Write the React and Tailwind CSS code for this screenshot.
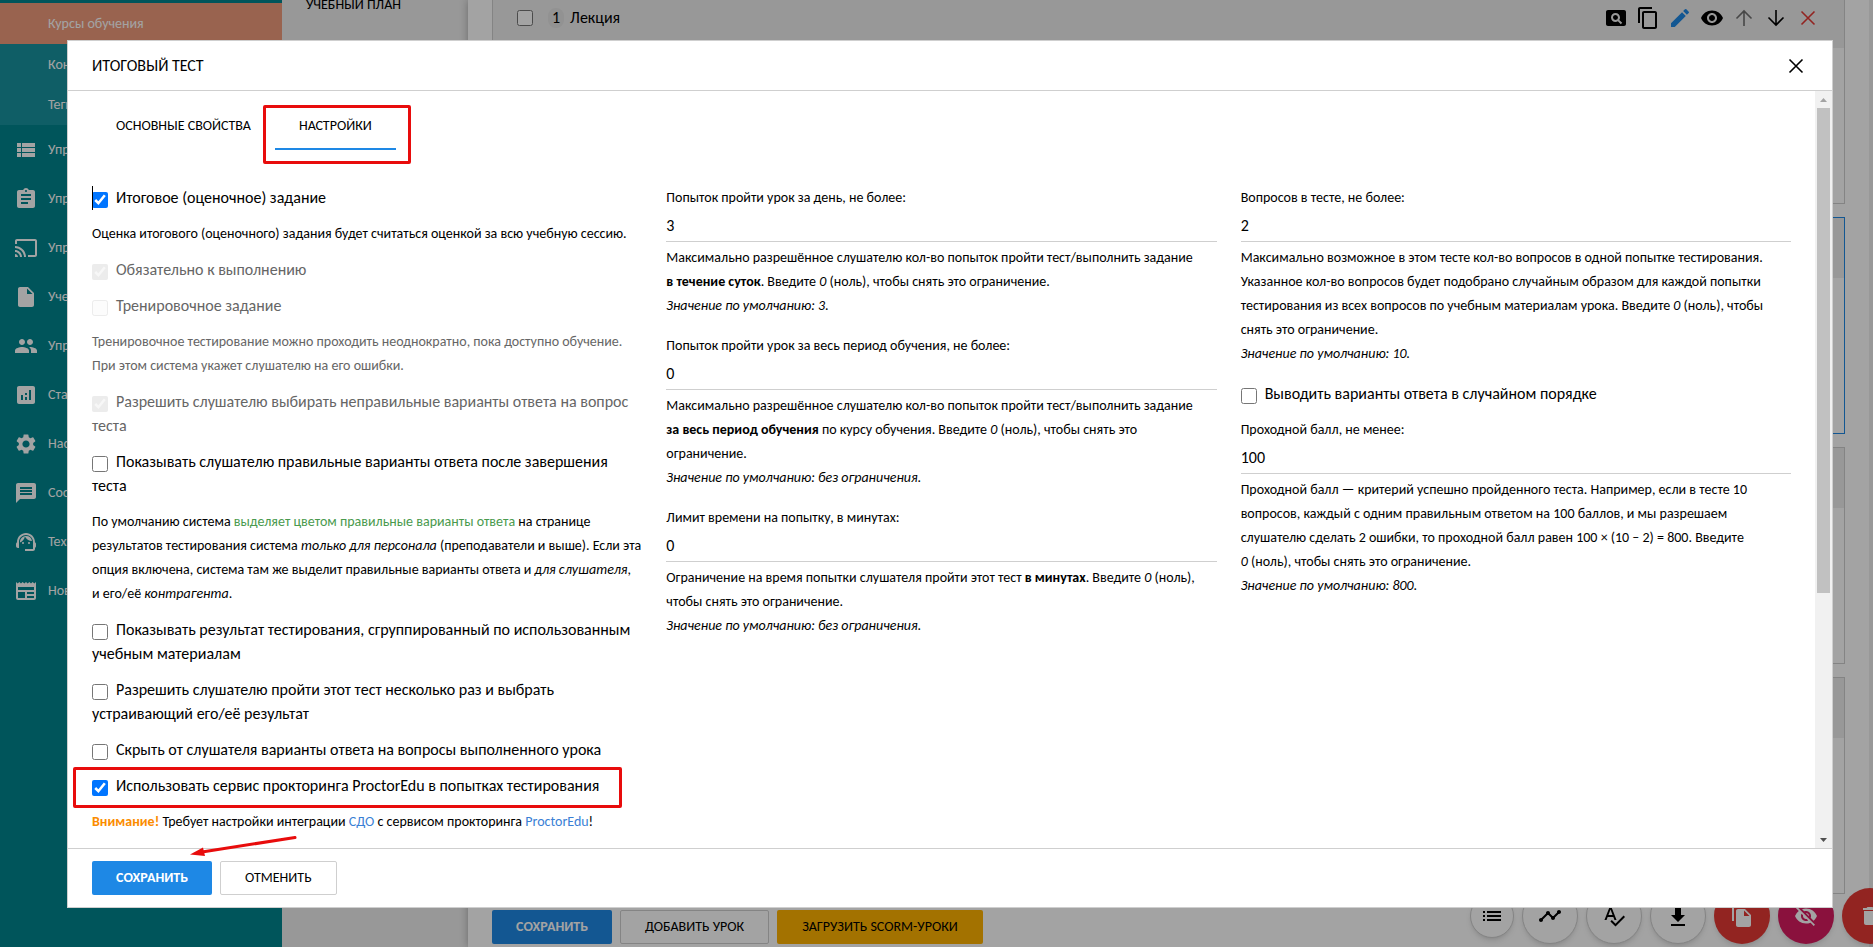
import { useState } from 'react'
import {
  MdAnalytics, MdAssignment, MdCast, MdContentCopy, MdDelete, MdEdit, MdFileCopy, MdInsertDriveFile,
  MdList, MdMessage, MdPageview, MdPeople, MdSettings, MdSpellcheck, MdSupportAgent, MdTimeline,
  MdViewList, MdVisibility, MdVisibilityOff,
} from 'react-icons/md'

function NewspaperIcon({ className }) {
  return (
    <svg viewBox="0 0 24 24" className={className} fill="currentColor" aria-hidden="true">
      <path
        fillRule="evenodd"
        d="M2 3l1.67 1.5L5.33 3 7 4.5 8.67 3l1.66 1.5L12 3l1.67 1.5L15.33 3 17 4.5 18.67 3l1.66 1.5L22 3v16a2 2 0 0 1-2 2H4a2 2 0 0 1-2-2V3zm2 5v3h16V8H4zm0 5v6h7v-6H4zm9 0v2h7v-2h-7zm0 4v2h7v-2h-7z"
      />
    </svg>
  )
}

function DownloadIcon({ className }) {
  return (
    <svg viewBox="0 0 24 24" className={className} fill="currentColor" aria-hidden="true">
      <path d="M9 2h6v9h4l-7 7-7-7h4zM5 20h14v2H5z" />
    </svg>
  )
}

function LineIcon({ className, d }) {
  return (
    <svg viewBox="0 0 24 24" className={className} fill="none" stroke="currentColor" strokeWidth="1.6" aria-hidden="true">
      <path d={d} />
    </svg>
  )
}

const CloseIcon = props => <LineIcon d="M5.500 5.500l13 13M18.500 5.500l-13 13" {...props} />
const UpIcon = props => <LineIcon d="M12 20V5M4.500 12.500L12 5l7.500 7.500" {...props} />
const DownIcon = props => <LineIcon d="M12 4v15M4.500 11.500L12 19l7.500-7.500" {...props} />

const subItems = ['Контрагенты', 'Теги']

const menu = [
  { label: 'Управление', Icon: MdViewList },
  { label: 'Управление', Icon: MdAssignment },
  { label: 'Управление', Icon: MdCast },
  { label: 'Учебные', Icon: MdInsertDriveFile },
  { label: 'Управление', Icon: MdPeople },
  { label: 'Статистика', Icon: MdAnalytics },
  { label: 'Настройки', Icon: MdSettings },
  { label: 'Сообщения', Icon: MdMessage },
  { label: 'Техподдержка', Icon: MdSupportAgent },
  { label: 'Новости', Icon: NewspaperIcon },
]

const lessonActions = [
  { label: 'Просмотр', Icon: MdPageview, color: 'text-black' },
  { label: 'Копировать', Icon: MdContentCopy, color: 'text-black' },
  { label: 'Изменить', Icon: MdEdit, color: 'text-[#1e88e5]' },
  { label: 'Показать', Icon: MdVisibility, color: 'text-black' },
  { label: 'Вверх', Icon: UpIcon, color: 'text-[#707070]' },
  { label: 'Вниз', Icon: DownIcon, color: 'text-black' },
  { label: 'Удалить', Icon: CloseIcon, color: 'text-[#e53935]' },
]

const fabs = [
  { label: 'Список', Icon: MdList, style: 'size-11 border border-[#cfcfcf] bg-white text-black' },
  { label: 'График', Icon: MdTimeline, style: 'size-14 border border-[#cfcfcf] bg-white text-black' },
  { label: 'Орфография', Icon: MdSpellcheck, style: 'size-14 border border-[#cfcfcf] bg-white text-black' },
  { label: 'Скачать', Icon: DownloadIcon, style: 'size-14 border border-[#cfcfcf] bg-white text-black' },
  { label: 'Дублировать', Icon: MdFileCopy, style: 'size-14 bg-[#e53935] text-white' },
  { label: 'Скрыть', Icon: MdVisibilityOff, style: 'size-14 bg-[#d81b60] text-white' },
  { label: 'Удалить всё', Icon: MdDelete, style: 'size-14 bg-[#e53935] text-white' },
]

function Sidebar() {
  return (
    <nav className="w-[282px] shrink-0 bg-[#00868f] pt-[3px] text-sm text-white">
      <a href="#courses" className="flex h-[41px] items-center bg-[#f09b7c] pl-12">Курсы обучения</a>
      <div className="bg-[#1894a0] pt-px">
        {subItems.map(label => (
          <a key={label} href="#sub" className="flex h-10 items-center pl-12">{label}</a>
        ))}
      </div>
      {menu.map(({ label, Icon }, i) => (
        <a key={i} href="#menu" className="flex h-[49px] items-center gap-2.5 pl-3.5">
          <Icon className="size-6" />
          {label}
        </a>
      ))}
    </nav>
  )
}

function LessonCard({ active, children }) {
  return (
    <section className={`h-[217px] shrink-0 border bg-white ${active ? 'border-[#1e88e5]' : 'border-[#cfcfcf]'}`}>
      <header className="flex h-[60px] items-center bg-[#eee] pr-4 pl-6">{children}</header>
    </section>
  )
}

function Backdrop() {
  return (
    <div className="flex h-full">
      <Sidebar />
      <aside className="w-[186px] shrink-0 bg-[#eee] pl-6">
        <a href="#plan" className="-mt-[7px] block text-sm leading-6">УЧЕБНЫЙ ПЛАН</a>
      </aside>
      <main className="flex min-w-0 flex-1 flex-col bg-white pr-6 pl-6 shadow-[0_0_8px_rgba(0,0,0,0.3)]">
        <div className="-mt-[13px] flex flex-col gap-[13px]">
          <LessonCard>
            <input type="checkbox" aria-label="Выбрать урок" className="size-4" />
            <span className="ml-[15px] rounded-full bg-[#e4e4e4] px-1 text-base leading-5">1</span>
            <span className="ml-1.5 text-base">Лекция</span>
            <div className="ml-auto flex gap-2 pr-2">
              {lessonActions.map(({ label, Icon, color }) => (
                <button key={label} type="button" aria-label={label} className={color}>
                  <Icon className="size-6" />
                </button>
              ))}
            </div>
          </LessonCard>
          <LessonCard active />
          <LessonCard />
          <LessonCard />
        </div>
        <div className="mt-4 flex gap-2 text-sm">
          <button type="button" className="h-[34px] rounded-xs bg-[#1e88e5] px-6 font-bold text-white">СОХРАНИТЬ</button>
          <button type="button" className="h-[34px] rounded-xs border border-[#cfcfcf] px-6">ДОБАВИТЬ УРОК</button>
          <button type="button" className="h-[34px] rounded-xs bg-[#ffb300] px-[25px]">ЗАГРУЗИТЬ SCORM-УРОКИ</button>
        </div>
      </main>
      <div className="w-1 shrink-0 bg-[#eee]" />
      <div className="absolute right-[-25px] bottom-[3px] flex items-center gap-2">
        {fabs.map(({ label, Icon, style }) => (
          <button
            key={label}
            type="button"
            aria-label={label}
            className={`flex items-center justify-center rounded-full shadow-md ${style}`}
          >
            <Icon className="size-6" />
          </button>
        ))}
      </div>
    </div>
  )
}

function Check({ children, checked = false, disabled = false }) {
  const [on, setOn] = useState(checked)
  return (
    <label className={`mb-3 block text-base leading-6 ${disabled ? 'text-[#666]' : ''}`}>
      <input
        type="checkbox"
        checked={on}
        disabled={disabled}
        onChange={e => setOn(e.target.checked)}
        className="mt-0.5 mr-2 size-4 align-middle disabled:opacity-40"
      />
      {children}
    </label>
  )
}

function Field({ id, label, value, hint, note }) {
  return (
    <div className="text-sm leading-6">
      <label htmlFor={id} className="block">{label}</label>
      <input id={id} defaultValue={value} className="block h-8 w-full border-b border-[#cfcfcf] text-base outline-none" />
      <p className="mt-1">{hint}</p>
      <p className="mb-4 italic">{note}</p>
    </div>
  )
}

const zero = <><i>0</i>{'\u00a0'}(ноль)</>

export default function App() {
  return (
    <div className="relative h-screen overflow-hidden bg-white text-black font-[Calibri,Carlito,Lato,sans-serif]">
      <Backdrop />

      <div className="fixed inset-0 bg-black/36 pt-10 pr-10 pb-[39px] pl-[67px]">
        <div role="dialog" aria-labelledby="dialog-title" className="flex h-full flex-col border border-[#cfcfcf] bg-white">
          <header className="flex h-[50px] shrink-0 items-center justify-between border-b border-[#cfcfcf] px-6">
            <h2 id="dialog-title" className="text-base">ИТОГОВЫЙ ТЕСТ</h2>
            <button type="button" aria-label="Закрыть"><CloseIcon className="size-6" /></button>
          </header>

          <div className="flex min-h-0 flex-1">
            <div className="min-w-0 flex-1 overflow-hidden px-6 pt-[11px]">
              <div role="tablist" className="flex h-[84px] items-start text-sm">
                <button type="button" role="tab" aria-selected="false" className="h-12 px-6">ОСНОВНЫЕ СВОЙСТВА</button>
                <div className="relative">
                  <button type="button" role="tab" aria-selected="true" className="h-12 border-b-2 border-[#1e88e5] px-6 pt-0.5">
                    НАСТРОЙКИ
                  </button>
                  <div className="pointer-events-none absolute top-[3px] -right-[15px] -bottom-3.5 -left-3 rounded-xs border-3 border-[#e80c0c]" />
                </div>
              </div>

              <div className="grid grid-cols-3 gap-6 text-sm leading-6">
                <div>
                  <div className="relative">
                    <span className="absolute top-0 left-0 h-6 w-px bg-black" />
                    <Check checked>Итоговое (оценочное) задание</Check>
                  </div>
                  <p className="mb-3">Оценка итогового (оценочного) задания будет считаться оценкой за всю учебную сессию.</p>
                  <Check checked disabled>Обязательно к выполнению</Check>
                  <Check disabled>Тренировочное задание</Check>
                  <p className="mb-3 text-[#666]">
                    Тренировочное тестирование можно проходить неоднократно, пока доступно обучение. При этом
                    система укажет слушателю на его ошибки.
                  </p>
                  <Check checked disabled>Разрешить слушателю выбирать неправильные варианты ответа на вопрос теста</Check>
                  <Check>Показывать слушателю правильные варианты ответа после завершения теста</Check>
                  <p className="mb-3">
                    По умолчанию система <span className="text-[#4a9a4e]">выделяет цветом правильные варианты ответа</span> на
                    странице результатов тестирования система <i>только для персонала</i> (преподаватели и выше). Если эта
                    опция включена, система там же выделит правильные варианты ответа и <i>для слушателя</i>,
                    и&nbsp;его/её <i>контрагента</i>.
                  </p>
                  <Check>Показывать результат тестирования, сгруппированный по использованным учебным материалам</Check>
                  <Check>Разрешить слушателю пройти этот тест несколько раз и выбрать устраивающий его/её результат</Check>
                  <Check>Скрыть от слушателя варианты ответа на вопросы выполненного урока</Check>
                  <div className="relative">
                    <Check checked>Использовать сервис прокторинга ProctorEdu в попытках тестирования</Check>
                    <div className="pointer-events-none absolute -top-[7px] right-5 -bottom-2.5 -left-[19px] rounded-xs border-3 border-[#e80c0c]" />
                  </div>
                  <p>
                    <b className="text-[#fb8c00]">Внимание!</b> Требует настройки интеграции{' '}
                    <a href="#sdo" className="text-[#3a7fd5]">СДО</a> с сервисом прокторинга{' '}
                    <a href="#proctoredu" className="text-[#3a7fd5]">ProctorEdu</a>!
                  </p>
                </div>

                <div>
                  <Field
                    id="per-day"
                    label="Попыток пройти урок за день, не более:"
                    value="3"
                    hint={<>Максимально разрешённое слушателю кол-во попыток пройти тест/выполнить задание <b>в&nbsp;течение суток</b>. Введите {zero}, чтобы снять это ограничение.</>}
                    note="Значение по умолчанию: 3."
                  />
                  <Field
                    id="per-course"
                    label="Попыток пройти урок за весь период обучения, не более:"
                    value="0"
                    hint={<>Максимально разрешённое слушателю кол-во попыток пройти тест/выполнить задание <b>за&nbsp;весь период обучения</b> по курсу обучения. Введите {zero}, чтобы снять это ограничение.</>}
                    note="Значение по умолчанию: без ограничения."
                  />
                  <Field
                    id="time-limit"
                    label="Лимит времени на попытку, в минутах:"
                    value="0"
                    hint={<>Ограничение на время попытки слушателя пройти этот тест <b>в минутах</b>. Введите {zero}, чтобы снять это ограничение.</>}
                    note="Значение по умолчанию: без ограничения."
                  />
                </div>

                <div>
                  <Field
                    id="questions"
                    label="Вопросов в тесте, не более:"
                    value="2"
                    hint={<>Максимально возможное в этом тесте кол-во вопросов в одной попытке тестирования. Указанное кол-во вопросов будет подобрано случайным образом для каждой попытки тестирования из всех вопросов по учебным материалам урока. Введите {zero}, чтобы снять это ограничение.</>}
                    note="Значение по умолчанию: 10."
                  />
                  <Check>Выводить варианты ответа в случайном порядке</Check>
                  <Field
                    id="pass-score"
                    label="Проходной балл, не менее:"
                    value="100"
                    hint={<>Проходной балл — критерий успешно пройденного теста. Например, если в тесте 10 вопросов, каждый с одним правильным ответом на 100 баллов, и мы разрешаем слушателю сделать 2 ошибки, то проходной балл равен 100 × (10 – 2) = 800. Введите {zero}, чтобы снять это ограничение.</>}
                    note="Значение по умолчанию: 800."
                  />
                </div>
              </div>
            </div>

            <div className="flex w-[17px] shrink-0 flex-col items-center bg-[#f1f1f1]" aria-hidden="true">
              <svg viewBox="0 0 17 17" className="size-[17px] shrink-0"><path d="M5 11h7L8.500 7z" fill="#a3a3a3" /></svg>
              <div className="w-[13px] flex-[485] bg-[#c1c1c1]" />
              <div className="flex-[238]" />
              <svg viewBox="0 0 17 17" className="size-[17px] shrink-0"><path d="M5 7h7l-3.500 4z" fill="#505050" /></svg>
            </div>
          </div>

          <footer className="relative flex h-[59px] shrink-0 items-center gap-2 border-t border-[#cfcfcf] px-6 text-sm">
            <button type="button" className="h-[34px] rounded-xs bg-[#1e88e5] px-6 font-bold text-white">СОХРАНИТЬ</button>
            <button type="button" className="h-[34px] rounded-xs border border-[#cfcfcf] px-6">ОТМЕНИТЬ</button>
            <svg
              viewBox="0 0 108 22"
              className="pointer-events-none absolute -top-3.5 left-[122px] h-[22px] w-[108px]"
              aria-hidden="true"
            >
              <path d="M105 2.500L12 17" stroke="#e80c0c" strokeWidth="3" strokeLinecap="round" />
              <path d="M0 19.500L13 12.500 15 21z" fill="#e80c0c" />
            </svg>
          </footer>
        </div>
      </div>
    </div>
  )
}
